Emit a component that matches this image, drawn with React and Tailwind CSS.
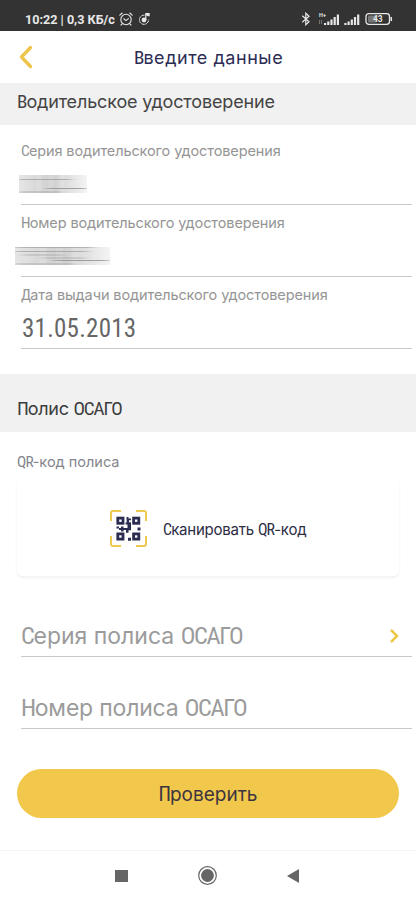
import React from "react";

// Capitals and digits are set in a narrow face, lower case in a wide one.
function Txt({ children, className = "" }) {
  const parts = children.split(/([A-ZА-Я]+)/).filter(Boolean);
  return (
    <span className={`pt-[2px] whitespace-pre ${className}`}>
      {parts.map((p, i) =>
        /^[A-ZА-Я]/.test(p) ? (
          <span key={i} className="font-[Roboto,'Open_Sans',sans-serif] text-[1.06em] tracking-[-0.055em] [font-stretch:75%]">{p}</span>
        ) : (
          p
        )
      )}
    </span>
  );
}

function StatusBar() {
  return (
    <div className="flex h-[31px] items-center justify-between bg-[#333333] pt-[7px] pl-[25px] pr-[23px] text-[#e8e8e8]">
      <div className="flex items-center font-[Roboto,sans-serif] text-[12.6px] leading-4 font-bold">
        <span className="w-[91px] pt-px whitespace-nowrap">10:22 | 0,3 КБ/с</span>
        <svg className="ml-[3px]" width="14" height="14" viewBox="0 0 14 14" fill="none" stroke="currentColor" strokeWidth="1.1" strokeLinecap="round">
          <circle cx="7" cy="7.5" r="5.2" />
          <path d="M0.8 3.2 3.2 1M13.2 3.2 10.8 1M4.8 6.8 7 8.6 9.4 6.6M3 12l-1 1M11 12l1 1" />
        </svg>
        <svg className="ml-[6px]" width="12" height="14" viewBox="0 0 12 14" fill="none" stroke="currentColor">
          <path d="M5.5 3.2A4.6 4.6 0 1 0 9.6 7.6" strokeWidth="1" strokeDasharray="2.5 .5" />
          <circle cx="5" cy="8" r="2.4" fill="currentColor" stroke="none" />
          <path d="M6.8 8V1.5" strokeWidth="1.2" />
          <path d="M6.5 1h4.2v3.2H9L6.5 3z" fill="currentColor" stroke="none" />
        </svg>
      </div>
      <div className="flex items-center">
        <svg className="mr-px" width="10" height="14" viewBox="0 0 10 14" fill="none" stroke="currentColor" strokeWidth="1.2">
          <path d="M1.3 3.8 8 9.8 4.8 12.8V1.2L8 4.2 1.3 10.2" />
        </svg>
        <svg className="ml-[6px]" width="24" height="14" viewBox="0 0 24 14" fill="currentColor">
          <text x="1" y="4.6" fontSize="5.5" fontWeight="700" fontFamily="Roboto, sans-serif">H+</text>
          <path d="M1.5 8v4M3.5 8v4" stroke="#888" strokeWidth=".8" />
          <path d="M6 11h2.2v2H6zM9.2 9.5h2.2V13h-2.2zM12.4 7.5h2.2V13h-2.2zM15.6 5h2.2v8h-2.2zM18.8 2.5h2.2V13h-2.2z" />
        </svg>
        <svg className="ml-[2px]" width="17" height="14" viewBox="0 0 17 14" fill="currentColor">
          <path d="M0.3 11h2.2v2H.3zM3.5 9.5h2.2V13H3.5zM6.7 7.5h2.2V13H6.7zM9.9 5h2.2v8H9.9zM13.1 2.5h2.2V13h-2.2z" />
        </svg>
        <svg className="ml-[4px]" width="28" height="14" viewBox="0 0 28 14">
          <rect x="1" y="1.7" width="23.5" height="10.6" rx="2.8" fill="none" stroke="currentColor" strokeWidth="1.3" />
          <rect x="3" y="3.6" width="9" height="6.8" rx="1" fill="#777" />
          <path d="M26.3 5v4" stroke="currentColor" strokeWidth="1.5" />
          <text x="12.8" y="10" textAnchor="middle" fontSize="8.5" fontWeight="700" fontFamily="Roboto, sans-serif" fill="currentColor">43</text>
        </svg>
      </div>
    </div>
  );
}

function Smudge({ wide }) {
  const id = wide ? "smudge-wide" : "smudge";
  return (
    <svg className={wide ? "-ml-[6px]" : "-ml-[2px]"} width={wide ? 95 : 68} height="18" viewBox="0 0 68 18" preserveAspectRatio="none">
      <defs>
        <linearGradient id={id}>
          <stop offset="0" stopColor="#e6e6e6" />
          <stop offset=".3" stopColor="#d6d6d6" />
          <stop offset=".5" stopColor="#d0d0d0" />
          <stop offset=".75" stopColor="#e2e2e2" />
          <stop offset="1" stopColor="#f4f4f4" />
        </linearGradient>
        <filter id={`${id}-soft`} filterUnits="userSpaceOnUse" x="0" y="0" width="68" height="18">
          <feGaussianBlur stdDeviation="3 .7" />
        </filter>
      </defs>
      <rect width="68" height="18" fill={`url(#${id})`} />
      <path d="M20 0v18M32 0v18M43 0v18" stroke="#fff" strokeOpacity=".15" strokeWidth="5" />
      <g filter={`url(#${id}-soft)`} strokeWidth="1.2">
        <path d="M0 4.5h52M0 17h42" stroke="#999" strokeOpacity=".7" />
        <path d="M28 13.5h39" stroke="#888" strokeOpacity=".75" />
        {wide && <path d="M5 8h30M20 11h30M0 .5h56" stroke="#888" strokeOpacity=".5" />}
      </g>
    </svg>
  );
}

function Field({ label, children }) {
  return (
    <div className="ml-[21px] mr-[4px] flex h-[72px] flex-col border-b border-[#c8c8c8]">
      <div className="flex h-[36px] items-center">
        <Txt className="text-[14.5px] tracking-[-0.11px] text-[#959595]">{label}</Txt>
      </div>
      <div className="flex h-[30px] items-center">{children}</div>
    </div>
  );
}

function QrIcon() {
  return (
    <svg width="38" height="38" viewBox="0 0 38 38" fill="none">
      <path d="M2 12V4q0-2 2-2h8M27 2h8q2 0 2 2v8M37 27v8q0 2-2 2h-8M12 37H4q-2 0-2-2v-8" stroke="#edc952" strokeWidth="2" />
      <g stroke="#2b2c51" strokeWidth="2.8">
        <rect x="8.8" y="9.1" width="5.2" height="5.2" />
        <rect x="24.6" y="9.1" width="5.2" height="5.2" />
        <rect x="8.8" y="24.9" width="5.2" height="5.2" />
        <rect x="24.6" y="24.9" width="5.2" height="5.2" />
      </g>
      <path d="M17.5 8h2v1.5H22v1.8h-2v2h2v8h-2.5v2.5H17V21h-2.5v1.5H12V21h-2v-1.5H7.5v-2H10V19h2v-1.5h2.5V19h4v-3.5h-2v-2h1.2zM28.5 18.5h3V21.5h-3zM19 28.7h3v3h-3z" fill="#2b2c51" />
    </svg>
  );
}

export default function App() {
  return (
    <div className="flex h-[900px] w-[416px] flex-col overflow-hidden bg-white font-[Inter,'Noto_Sans',sans-serif]">
      <StatusBar />
      <header className="flex h-[52px] shrink-0 items-center">
        <svg className="ml-[18px]" width="16" height="24" viewBox="0 0 16 24" fill="none" stroke="#edc54c" strokeWidth="3.4" strokeLinecap="round" strokeLinejoin="round">
          <path d="M12.5 2.5 3.5 12l9 9.5" />
        </svg>
        <h1 className="ml-[100px] flex items-center">
          <Txt className="text-[18px] tracking-[0.55px] text-[#2c2c54]">Введите данные</Txt>
        </h1>
      </header>
      <section className="flex h-[42px] shrink-0 items-center bg-[#f1f1f1] pb-[6px] pl-[17px]">
        <Txt className="text-[18px] tracking-[-0.15px] text-[#444444]">Водительское удостоверение</Txt>
      </section>
      <div className="flex shrink-0 flex-col pt-[8px]">
        <Field label="Серия водительского удостоверения"><Smudge /></Field>
        <Field label="Номер водительского удостоверения"><Smudge wide /></Field>
        <Field label="Дата выдачи водительского удостоверения">
          <span className="ml-px pt-[2px] font-[Roboto,'Open_Sans',sans-serif] text-[25px] tracking-[0.25px] text-[#666666] [font-stretch:75%]">31.05.2013</span>
        </Field>
      </div>
      <section className="mt-[25px] flex h-[58px] shrink-0 items-center bg-[#f1f1f1] pt-[10px] pl-[17px]">
        <Txt className="text-[18px] tracking-[-0.3px] text-[#3c3c3c]">Полис ОСАГО</Txt>
      </section>
      <div className="flex h-[48px] shrink-0 items-center pt-[12px] pl-[17px]">
        <Txt className="text-[14.5px] text-[#85858d]">QR-код полиса</Txt>
      </div>
      <div className="mx-[17px] flex h-[96px] shrink-0 items-center rounded-[5px] bg-white pl-[92px] shadow-[0_2px_3px_rgba(0,0,0,0.06)]">
        <QrIcon />
        <Txt className="ml-[16px] pt-[4px] text-[15px] tracking-[-0.22px] text-[#2c2c44]">Сканировать QR-код</Txt>
      </div>
      <div className="mt-[39px] mr-[4px] ml-[21px] flex h-[42px] shrink-0 items-center justify-between border-b border-[#c8c8c8]">
        <Txt className="text-[23px] text-[#9b9b9b]">Серия полиса ОСАГО</Txt>
        <svg className="mr-[12px]" width="11" height="16" viewBox="0 0 11 16" fill="none" stroke="#edc948" strokeWidth="2.5">
          <path d="M2 2l6 6-6 6" />
        </svg>
      </div>
      <div className="mt-[30px] mr-[4px] ml-[21px] flex h-[42px] shrink-0 items-center border-b border-[#c8c8c8]">
        <Txt className="text-[23px] tracking-[-0.2px] text-[#9b9b9b]">Номер полиса ОСАГО</Txt>
      </div>
      <button className="mx-[17px] mt-[40px] flex h-[49px] shrink-0 items-center justify-center rounded-full bg-[#f2c84c]">
        <Txt className="text-[19px] text-[#3c3540]">Проверить</Txt>
      </button>
      <nav className="mt-[32px] flex h-[50px] shrink-0 items-center border-t border-[#f3f3f3] text-[#666666]">
        <div className="ml-[115px] h-[12px] w-[13px] bg-[#666666]" />
        <svg className="ml-[69px]" width="21" height="21" viewBox="0 0 21 21">
          <circle cx="10.5" cy="10.5" r="8.8" fill="none" stroke="currentColor" strokeWidth="1.2" />
          <circle cx="10.5" cy="10.5" r="6.4" fill="currentColor" />
        </svg>
        <svg className="ml-[68px]" width="14" height="16" viewBox="0 0 14 16" fill="currentColor">
          <path d="M13 1v14L1 8z" />
        </svg>
      </nav>
    </div>
  );
}
